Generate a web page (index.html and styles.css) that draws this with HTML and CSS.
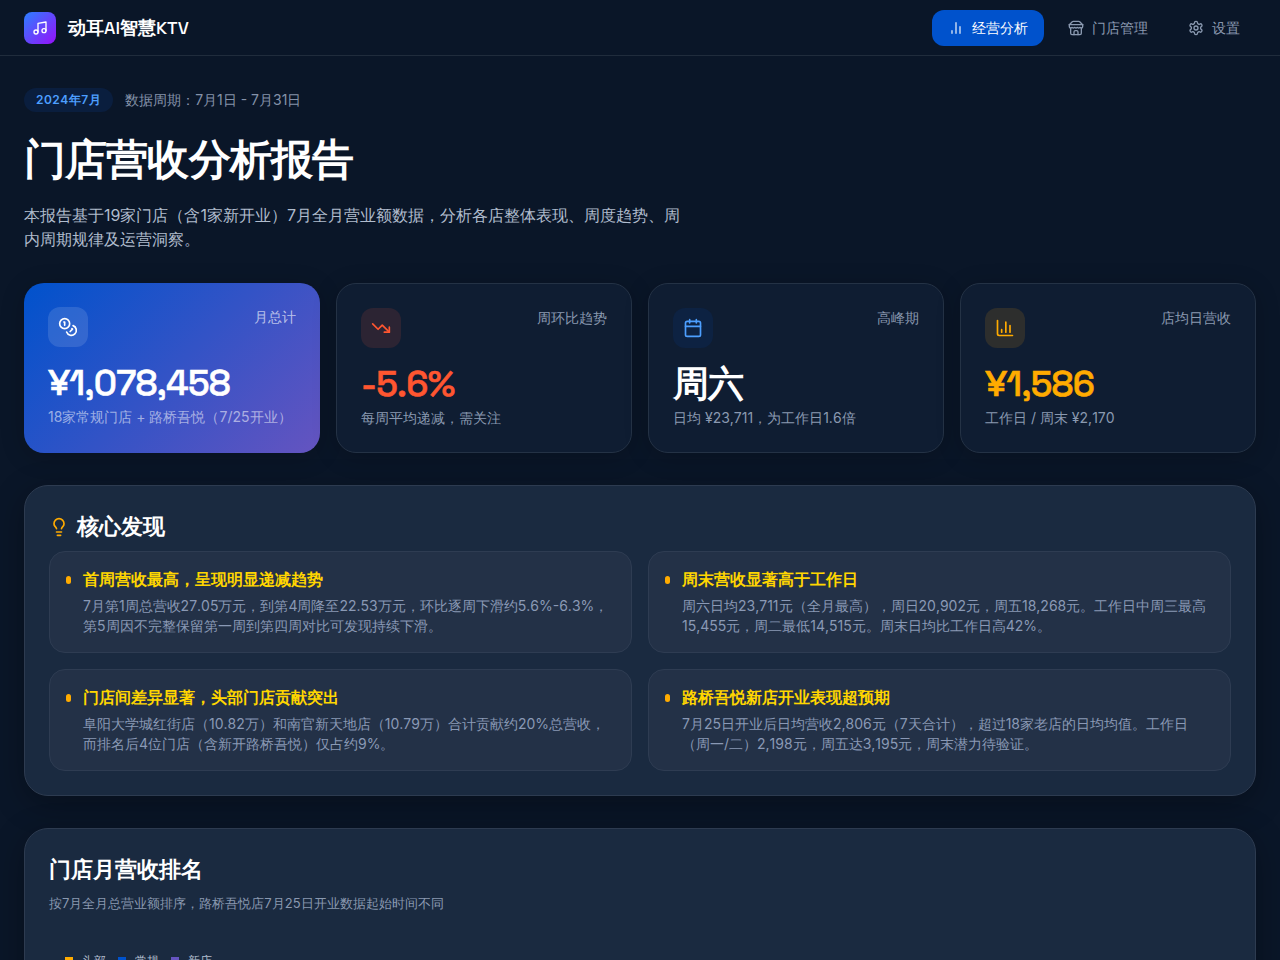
FILE: index.html
```html
<!DOCTYPE html>
<html lang="en">
<head>
<meta charset="utf-8">
<meta name="viewport" content="width=device-width, initial-scale=1">
<title>动耳AI智慧KTV</title>
<link rel="stylesheet" href="styles.css">
</head>
<body>
<header class="topbar">
  <div class="brand">
    <span class="brand-mark"><svg class="icon" viewBox="0 0 24 24"><path d="M9 18V5l12-2v13"/><circle cx="6" cy="18" r="3"/><circle cx="18" cy="16" r="3"/></svg></span>
    <span class="brand-name">动耳<span class="latin">AI</span>智慧<span class="latin">KTV</span></span>
  </div>
  <nav class="nav">
    <button class="nav-item active" type="button"><svg class="icon" viewBox="0 0 24 24"><path d="M12 20V4M18 20v-10M6 20v-4"/></svg>经营分析</button>
    <button class="nav-item" type="button"><svg class="icon" viewBox="0 0 24 24"><path d="m2 7 4.41-4.41A2 2 0 0 1 7.83 2h8.34a2 2 0 0 1 1.42.59L22 7"/><path d="M4 12v8a2 2 0 0 0 2 2h12a2 2 0 0 0 2-2v-8"/><path d="M15 22v-4a2 2 0 0 0-2-2h-2a2 2 0 0 0-2 2v4"/><path d="M2 7h20"/><path d="M22 7v3a2 2 0 0 1-2 2a2.7 2.7 0 0 1-1.59-.63.7.7 0 0 0-.82 0A2.7 2.7 0 0 1 16 12a2.7 2.7 0 0 1-1.59-.63.7.7 0 0 0-.82 0A2.7 2.7 0 0 1 12 12a2.7 2.7 0 0 1-1.59-.63.7.7 0 0 0-.82 0A2.7 2.7 0 0 1 8 12a2.7 2.7 0 0 1-1.59-.63.7.7 0 0 0-.82 0A2.7 2.7 0 0 1 4 12a2 2 0 0 1-2-2V7"/></svg>门店管理</button>
    <button class="nav-item" type="button"><svg class="icon" viewBox="0 0 24 24"><path d="M12.22 2h-.44a2 2 0 0 0-2 2v.18a2 2 0 0 1-1 1.73l-.43.25a2 2 0 0 1-2 0l-.15-.08a2 2 0 0 0-2.73.73l-.22.38a2 2 0 0 0 .73 2.73l.15.1a2 2 0 0 1 1 1.72v.51a2 2 0 0 1-1 1.74l-.15.09a2 2 0 0 0-.73 2.73l.22.38a2 2 0 0 0 2.73.73l.15-.08a2 2 0 0 1 2 0l.43.25a2 2 0 0 1 1 1.73V20a2 2 0 0 0 2 2h.44a2 2 0 0 0 2-2v-.18a2 2 0 0 1 1-1.73l.43-.25a2 2 0 0 1 2 0l.15.08a2 2 0 0 0 2.73-.73l.22-.39a2 2 0 0 0-.73-2.73l-.15-.08a2 2 0 0 1-1-1.74v-.5a2 2 0 0 1 1-1.74l.15-.09a2 2 0 0 0 .73-2.73l-.22-.38a2 2 0 0 0-2.73-.73l-.15.08a2 2 0 0 1-2 0l-.43-.25a2 2 0 0 1-1-1.73V4a2 2 0 0 0-2-2z"/><circle cx="12" cy="12" r="3"/></svg>设置</button>
  </nav>
</header>
<main class="page">
  <section class="intro">
    <div class="meta"><span class="badge">2024年7月</span><span class="period">数据周期：7月1日 - 7月31日</span></div>
    <h1 class="title">门店营收分析报告</h1>
    <p class="lead">本报告基于19家门店（含1家新开业）7月全月营业额数据，分析各店整体表现、周度趋势、周内周期规律及运营洞察。</p>
  </section>
  <section class="stats">
    <article class="stat total">
      <div class="stat-head"><span class="chip"><svg class="icon" viewBox="0 0 24 24"><circle cx="8" cy="8" r="6"/><path d="M18.09 10.37A6 6 0 1 1 10.34 18"/><path d="M7 6h1v4"/><path d="m16.71 13.88.7.71-2.82 2.82"/></svg></span><span class="stat-label">月总计</span></div>
      <div class="value number">¥1,078,458</div>
      <div class="note">18家常规门店 + 路桥吾悦（7/25开业）</div>
    </article>
    <article class="stat trend">
      <div class="stat-head"><span class="chip"><svg class="icon" viewBox="0 0 24 24"><path d="m22 17-8.5-8.5-5 5L2 7"/><path d="M16 17h6v-6"/></svg></span><span class="stat-label">周环比趋势</span></div>
      <div class="value number">-5.6%</div>
      <div class="note">每周平均递减，需关注</div>
    </article>
    <article class="stat peak">
      <div class="stat-head"><span class="chip"><svg class="icon" viewBox="0 0 24 24"><path d="M8 2v4M16 2v4M3 10h18"/><rect x="3" y="4" width="18" height="18" rx="2"/></svg></span><span class="stat-label">高峰期</span></div>
      <div class="value">周六</div>
      <div class="note">日均 ¥23,711，为工作日1.6倍</div>
    </article>
    <article class="stat average">
      <div class="stat-head"><span class="chip"><svg class="icon" viewBox="0 0 24 24"><path d="M3 3v16a2 2 0 0 0 2 2h16"/><path d="M18 17V9M13 17V5M8 17v-3"/></svg></span><span class="stat-label">店均日营收</span></div>
      <div class="value number">¥1,586</div>
      <div class="note">工作日 / 周末 ¥2,170</div>
    </article>
  </section>
  <section class="panel">
    <h2 class="panel-title"><svg class="icon bulb" viewBox="0 0 24 24"><path d="M15 14c.2-1 .7-1.7 1.5-2.5 1-.9 1.5-2.2 1.5-3.5A6 6 0 0 0 6 8c0 1 .2 2.2 1.5 3.5.7.7 1.3 1.5 1.5 2.5"/><path d="M9 18h6M10 22h4"/></svg>核心发现</h2>
    <div class="findings">
      <article class="finding"><span class="dot"></span><div><h3 class="finding-title">首周营收最高，呈现明显递减趋势</h3><p class="finding-text">7月第1周总营收27.05万元，到第4周降至22.53万元，环比逐周下滑约5.6%-6.3%，第5周因不完整保留第一周到第四周对比可发现持续下滑。</p></div></article>
      <article class="finding"><span class="dot"></span><div><h3 class="finding-title">周末营收显著高于工作日</h3><p class="finding-text">周六日均23,711元（全月最高），周日20,902元，周五18,268元。工作日中周三最高15,455元，周二最低14,515元。周末日均比工作日高42%。</p></div></article>
      <article class="finding"><span class="dot"></span><div><h3 class="finding-title">门店间差异显著，头部门店贡献突出</h3><p class="finding-text">阜阳大学城红街店（10.82万）和南官新天地店（10.79万）合计贡献约20%总营收，而排名后4位门店（含新开路桥吾悦）仅占约9%。</p></div></article>
      <article class="finding"><span class="dot"></span><div><h3 class="finding-title">路桥吾悦新店开业表现超预期</h3><p class="finding-text">7月25日开业后日均营收2,806元（7天合计），超过18家老店的日均均值。工作日（周一/二）2,198元，周五达3,195元，周末潜力待验证。</p></div></article>
    </div>
  </section>
  <section class="panel">
    <h2 class="panel-title">门店月营收排名</h2>
    <p class="panel-note">按7月全月总营业额排序，路桥吾悦店7月25日开业数据起始时间不同</p>
    <ul class="legend"><li class="key head">头部</li><li class="key regular">常规</li><li class="key fresh">新店</li></ul>
  </section>
</main>
</body>
</html>
```
FILE: styles.css
```css
*, *::before, *::after { box-sizing: border-box; }
body, h1, h2, h3, p, ul { margin: 0; padding: 0; }
body {
  height: 100vh;
  overflow: hidden;
  background: #0a1628;
  color: #fff;
  font: 14px/20px Inter, sans-serif;
  font-kerning: none;
  text-spacing-trim: space-all;
}
.icon {
  width: 16px;
  height: 16px;
  flex: none;
  fill: none;
  stroke: currentColor;
  stroke-width: 2;
  stroke-linecap: round;
  stroke-linejoin: round;
}
.topbar {
  display: flex;
  align-items: center;
  justify-content: space-between;
  height: 56px;
  padding: 0 24px;
  border-bottom: 1px solid #202c3c;
}
.brand { display: flex; align-items: center; gap: 12px; }
.brand-mark {
  display: grid;
  place-items: center;
  width: 32px;
  height: 32px;
  border-radius: 8px;
  background: linear-gradient(135deg, #2b7fff, #9810fa);
}
.brand-name, .title, .value, .panel-title, .finding-title {
  font-family: "Space Grotesk", sans-serif;
}
.brand-name { font-size: 18px; line-height: 28px; font-weight: 600; }
.latin { font-weight: 500; }
.nav { display: flex; gap: 8px; }
.nav-item {
  display: flex;
  align-items: center;
  gap: 8px;
  padding: 8px 16px;
  border: 0;
  border-radius: 12px;
  background: none;
  color: #8a99b0;
  font: inherit;
}
.nav-item.active { background: #0052cc; color: #fff; }
.nav-item.active .icon { opacity: 0.85; }
.page { padding: 32px 24px; }
.meta { display: flex; align-items: center; gap: 12px; margin-bottom: 16px; }
.badge {
  padding: 4px 12px;
  border-radius: 12px;
  background: #0a1e3e;
  color: #4d9fff;
  font-size: 12px;
  line-height: 16px;
  font-weight: 600;
  letter-spacing: 0.04em;
}
.period { color: #8492a9; }
.title { margin-bottom: 12px; font-size: 42px; line-height: 63px; font-weight: 700; letter-spacing: -0.02em; }
.lead { max-width: 664px; color: #b0bccd; font-size: 16px; line-height: 24px; }
.stats {
  display: grid;
  grid-template-columns: repeat(4, 1fr);
  gap: 16px;
  margin: 32px 0;
}
.stat {
  padding: 24px;
  border: 1px solid #243245;
  border-radius: 20px;
  background: #0f1d32;
  box-shadow: 0 4px 24px rgba(0, 0, 0, 0.2);
}
.stat-head { display: flex; align-items: flex-start; justify-content: space-between; margin-bottom: 16px; }
.chip { display: grid; place-items: center; width: 40px; height: 40px; border-radius: 12px; }
.chip .icon, .panel-title .icon { width: 20px; height: 20px; }
.stat-label, .note { color: #8a99b0; }
.value { margin-bottom: 4px; font-size: 36px; line-height: 40px; font-weight: 700; letter-spacing: -0.02em; }
.number { font-weight: 500; -webkit-text-stroke: 0.6px currentColor; }
.total { border: 0; background: linear-gradient(135deg, #0052cc, #6554c0); }
.total .chip { background: rgba(255, 255, 255, 0.12); }
.total .stat-label { color: rgba(255, 255, 255, 0.65); }
.total .note { color: rgba(255, 255, 255, 0.55); }
.trend .chip { background: #2c2433; color: #ff5630; }
.trend .value { color: #ff5630; }
.peak .chip { background: #0d2242; color: #4d9fff; }
.average .chip { background: #2d2e2d; color: #ffab00; }
.average .value { color: #ffab00; }
.panel {
  margin-bottom: 32px;
  padding: 24px;
  border: 1px solid #2d3b50;
  border-radius: 24px;
  background: #1a2a40;
  box-shadow: 0 8px 32px rgba(0, 0, 0, 0.3);
}
.panel-title {
  display: flex;
  align-items: center;
  gap: 8px;
  margin-bottom: 8px;
  font-size: 22px;
  line-height: 33px;
  font-weight: 600;
}
.bulb { color: #ffab00; }
.findings { display: grid; grid-template-columns: repeat(2, 1fr); gap: 16px; }
.finding {
  display: flex;
  gap: 12px;
  padding: 16px;
  border: 1px solid #2e3c52;
  border-radius: 16px;
  background: #233147;
}
.dot { flex: none; width: 5px; height: 8px; margin-top: 8px; border-radius: 3px; background: #ffab00; }
.finding-title { margin-bottom: 4px; color: #ffd600; font-size: 16px; line-height: 24px; font-weight: 600; }
.finding-text { color: #8a99b5; }
.panel-note { color: #8a99b0; font-size: 13px; line-height: 19px; }
.legend {
  display: flex;
  gap: 12px;
  margin-top: 40px;
  padding: 0 16px;
  list-style: none;
  color: #b0bccd;
  font-size: 12px;
  line-height: 16px;
}
.key { display: flex; align-items: center; gap: 9px; }
.key::before { content: ""; width: 8px; height: 8px; background: var(--swatch); }
.head { --swatch: #ffab00; }
.regular { --swatch: #0052cc; }
.fresh { --swatch: #6554c0; }
```
